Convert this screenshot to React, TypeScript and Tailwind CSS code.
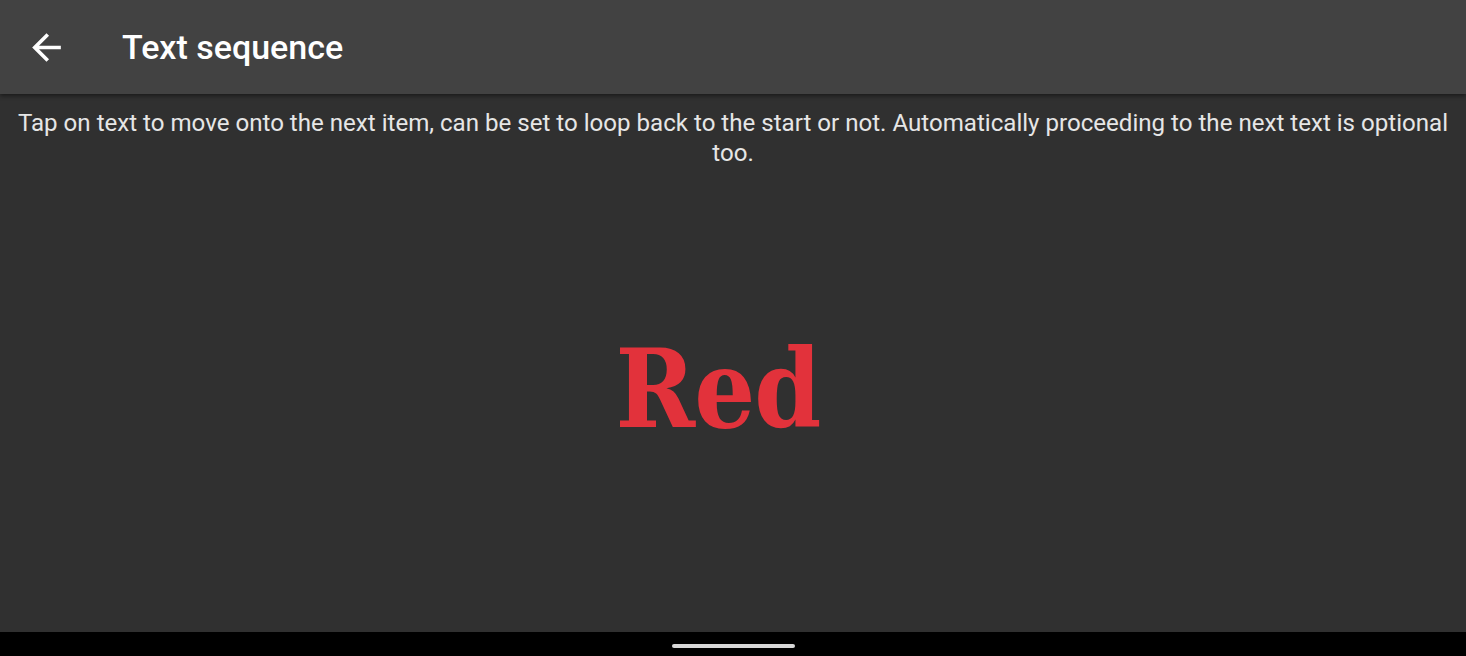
import React from "react";

export default function App() {
  return (
    <div className="w-[1466px] h-[656px] flex flex-col bg-[#303030] overflow-hidden" style={{ fontFamily: "Roboto, 'Noto Sans', sans-serif" }}>
      <div className="h-[94px] shrink-0 bg-[#424242] flex items-center shadow-[0_2px_4px_rgba(0,0,0,0.45)] relative z-10">
        <div className="ml-[25px] w-[43px] h-[43px] flex items-center justify-center">
          <svg viewBox="0 0 24 24" width="43" height="43" fill="#ffffff">
            <path d="M20 11H7.83l5.59-5.59L12 4l-8 8 8 8 1.41-1.41L7.83 13H20v-2z" />
          </svg>
        </div>
        <div className="ml-[54px] text-[34px] font-medium text-white">Text sequence</div>
      </div>
      <div className="flex-1 flex flex-col">
        <div className="pt-[14px] px-[14px] text-center text-[24.1px] leading-[30px] text-[#e6e6e6]">
          Tap on text to move onto the next item, can be set to loop back to the start or not. Automatically proceeding to the next text is optional too.
        </div>
        <div className="flex-1 flex items-center justify-center pb-[22px]">
          <div
            className="text-[96px] font-bold text-[#e2323b] leading-none pr-[30px] tracking-[-1px] scale-y-[1.14]"
            style={{ fontFamily: "'DejaVu Serif', 'Liberation Serif', serif" }}
          >
            Red
          </div>
        </div>
      </div>
      <div className="h-[24px] shrink-0 bg-black flex items-center justify-center">
        <div className="w-[123px] h-[4px] rounded-full bg-[#d8d8d8] mt-[4px]" />
      </div>
    </div>
  );
}
